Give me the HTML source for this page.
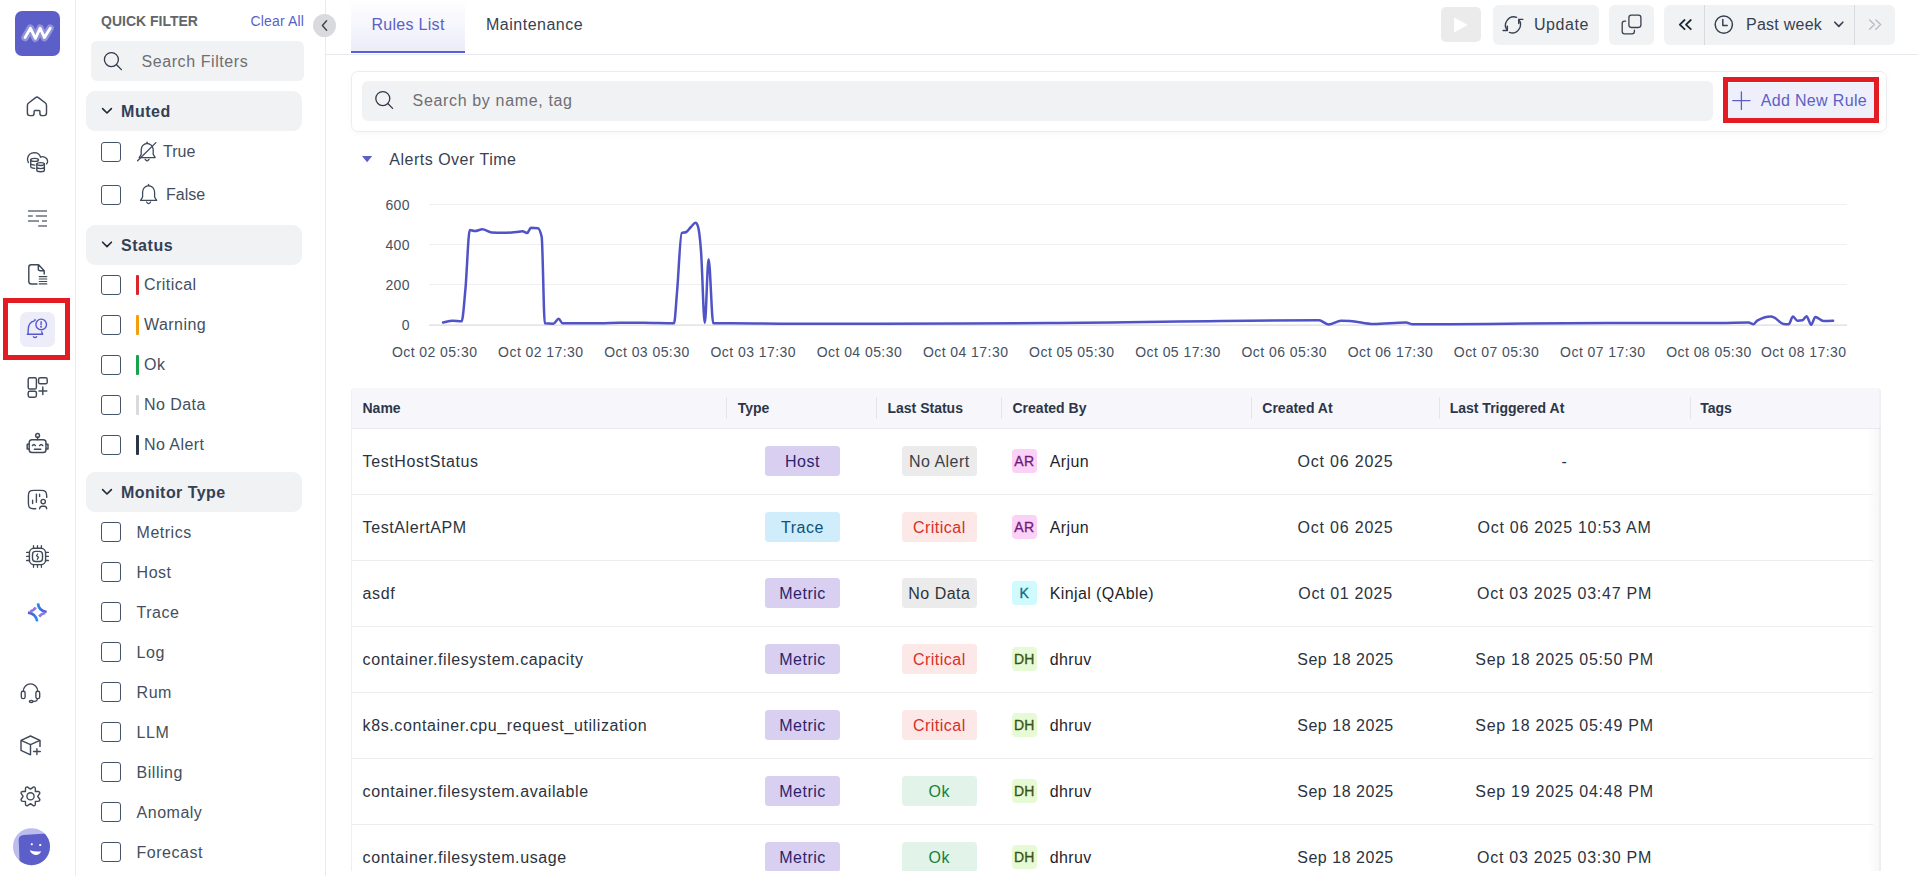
<!DOCTYPE html>
<html><head><meta charset="utf-8">
<style>
*{box-sizing:border-box;margin:0;padding:0}
html,body{width:1918px;height:876px;overflow:hidden;background:#fff;font-family:"Liberation Sans",sans-serif;color:#374151}
.a{position:absolute}
.t{position:absolute;white-space:nowrap;line-height:1}
svg{position:absolute;overflow:visible;z-index:5}
/* nav */
#nav{left:0;top:0;width:76px;height:876px;border-right:1px solid #ebebf1;background:#fff}
#fp{left:76px;top:0;width:250px;height:876px;border-right:1px solid #e9e9ef;background:#fff}
.hdr{position:absolute;left:86px;width:216px;height:40px;background:#f1f2f4;border-radius:9px}
.chev{position:absolute;left:102px}
.hdr-t{font-weight:bold;font-size:16px;color:#344054;left:121px}
.cb{position:absolute;left:101px;width:20px;height:20px;border:1.5px solid #44546a;border-radius:3px;background:#fff}
.ft{font-size:16px;color:#434f60;letter-spacing:0.3px}
.bar{position:absolute;left:136px;width:2.5px;height:20px;border-radius:1px}
</style></head><body>

<!-- LEFT NAV -->
<div id="nav" class="a"></div>
<div class="a" style="left:15px;top:11px;width:45px;height:45px;background:#5c5fc8;border-radius:7px"></div>
<svg style="left:15px;top:11px" width="45" height="45" viewBox="15 11 45 45">
  <polyline points="25,37.6 30.4,28.2 35.4,38.3 40.1,28.2 44.5,37.6 50.2,28.2" fill="none" stroke="rgba(255,255,255,0.33)" stroke-width="7.4" stroke-linecap="round" stroke-linejoin="round"/>
  <polyline points="25,37.6 30.4,28.2 35.4,38.3 40.1,28.2 44.5,37.6 50.2,28.2" fill="none" stroke="#fff" stroke-width="2.8" stroke-linecap="round" stroke-linejoin="round"/>
</svg>


<div class="a" style="left:20px;top:312px;width:35px;height:35px;background:#ededf9;border-radius:7px"></div>
<div class="a" style="left:2.6px;top:298.2px;width:67.8px;height:61.7px;border:5.2px solid #e31b23"></div>
<svg style="left:0;top:0" width="76" height="876" viewBox="0 0 76 876">
<g fill="none" stroke="#3f4958" stroke-width="1.45" stroke-linecap="round" stroke-linejoin="round">
  <!-- home -->
  <path d="M27.4,113 V105.4 Q27.4,104 28.6,103 L35.6,97.6 Q37,96.5 38.4,97.6 L45.4,103 Q46.5,104 46.5,105.4 V113 Q46.5,115.6 43.9,115.6 H42 Q39.9,115.6 39.9,113.5 V111.3 Q39.9,110.5 39,110.5 H35 Q34.1,110.5 34.1,111.3 V113.5 Q34.1,115.6 32,115.6 H30 Q27.4,115.6 27.4,113 Z"/>
  <!-- db cloud -->
  <path d="M28.4,162.6 Q27.2,160.4 27.6,158.2 Q28.6,152.8 34.4,152.6 Q39,152.6 40.6,157.2 Q42,156.4 43.6,156.8 Q47.4,157.8 47.6,161.4 Q47.6,162.8 46.6,163.9" stroke-width="1.35"/>
  <ellipse cx="34.6" cy="159.9" rx="3.9" ry="1.5" stroke-width="1.35"/>
  <path d="M30.7,159.9 V166.6 Q30.7,168.1 34.8,168.3 M30.7,163.2 Q30.7,164.8 34.8,165.1" stroke-width="1.35"/>
  <ellipse cx="40.6" cy="164" rx="3.8" ry="1.45" stroke-width="1.35"/>
  <path d="M36.8,164 V170.2 Q36.8,171.7 40.6,171.7 Q44.4,171.7 44.4,170.2 V164 M36.8,167.1 Q36.8,168.6 40.6,168.6 Q44.4,168.6 44.4,167.1" stroke-width="1.35"/>
  <!-- file -->
  <path d="M37,284 H31.2 Q28.8,284 28.8,281.6 V267.2 Q28.8,264.8 31.2,264.8 H38.6 L44.2,270.8 V274 M38.3,265 V268.8 Q38.3,270.8 40.3,270.8 H44.2"/>
  <path d="M39.2,276.6 H46.8 M39.2,279 H46.8 M39.2,281.5 H46.8 M39.2,283.9 H46.8" stroke-width="1.1"/>
  <!-- grid plus -->
  <rect x="28.2" y="377.8" width="8.2" height="11.2" rx="1.6"/>
  <rect x="28.2" y="391.2" width="8.2" height="6" rx="1.6"/>
  <rect x="38.6" y="377.8" width="8.6" height="6" rx="1.6"/>
  <path d="M42.8,387 V394.6 M39,391 H46.8"/>
  <!-- robot -->
  <circle cx="37.6" cy="435.4" r="1.9"/>
  <path d="M37.6,437.3 V439.8"/>
  <rect x="29.2" y="439.8" width="16.8" height="12.8" rx="2.8"/>
  <path d="M29.2,444.2 H27.2 V449 H29.2 M46,444.2 H48 V449 H46"/>
  <path d="M32.4,445.6 Q33.8,443.2 35.4,445.6 M39.6,445.6 Q41.2,443.2 42.8,445.6 M34.4,449.2 H40.8"/>
  <!-- analytics -->
  <path d="M35.7,508.7 H33.6 C29.6,508.7 28.4,507.4 28.4,503 V496 C28.4,491.6 29.6,490.4 34,490.4 H41 C45.4,490.4 46.6,491.6 46.7,496 V497.4" stroke-width="1.4"/>
  <path d="M32.6,500.3 V503.5 M36.4,494.3 V502.3 M39.6,494.3 V496.5" stroke-width="1.4"/>
  <circle cx="43.2" cy="501.6" r="2.2" stroke-width="1.4"/>
  <path d="M39.6,508.7 Q40,506.3 42,506.3 H44.6 Q46.4,506.3 46.7,508.7" stroke-width="1.4"/>
  <!-- chip -->
  <rect x="29.4" y="548.3" width="16.2" height="16.3" rx="4.6" stroke-width="1.4"/>
  <rect x="32.5" y="551.4" width="10" height="10.1" rx="3" stroke-width="1.4"/>
  <path d="M37.6,554 L36.5,555.8 L38.6,557.2 L37.4,559.2" stroke-width="1.3"/>
  <path d="M33.5,545.6 V548.3 M37.5,545.6 V548.3 M41.4,545.6 V548.3 M33.5,564.6 V567.3 M37.5,564.6 V567.3 M41.4,564.6 V567.3 M26.6,552.4 H29.4 M26.6,556.4 H29.4 M26.6,560.5 H29.4 M45.6,552.4 H48.4 M45.6,556.4 H48.4 M45.6,560.5 H48.4" stroke-width="1.3"/>
  <!-- headset -->
  <path d="M23.4,691 A7.05,7.05 0 0 1 37.6,691" stroke-width="1.35"/>
  <rect x="21.3" y="691.2" width="3.8" height="7.4" rx="1.7" stroke-width="1.35"/>
  <rect x="35.9" y="691.2" width="3.8" height="7.4" rx="1.7" stroke-width="1.35"/>
  <path d="M37.4,698.6 Q37.4,701.4 34.6,701.4 H33.2" stroke-width="1.2"/>
  <ellipse cx="31.2" cy="701.6" rx="1.9" ry="1.1" stroke-width="1.3"/>
  <!-- box plus -->
  <path d="M30.5,736 L21,740.4 V750.3 L30.5,754.8 M30.5,736 L40,740.4 V746.6 M21,740.4 L30.5,744.6 L40,740.4 M30.5,744.6 V754.8"/>
  <path d="M36.9,748.6 V754.6 M33.6,751.5 H40.3" stroke-width="1.4"/>
  <!-- gear -->
  <path d="M25.45,791.45 V788.6 Q25.6,786.8 27.2,786.9 L30.5,789.1 L33.6,786.9 Q35.2,786.8 35.35,788.6 V791.45 H38.2 Q40,791.6 39.9,793.1 L37.7,796.3 L39.9,799.5 Q40,801.1 38.2,801.35 H35.35 V804.2 Q35.2,805.9 33.6,805.8 L30.5,803.7 L27.2,805.8 Q25.6,805.9 25.45,804.2 V801.35 H22.6 Q20.9,801.1 21,799.5 L23.1,796.3 L21,793.1 Q20.9,791.6 22.6,791.45 Z" stroke-width="1.4"/>
  <circle cx="30.5" cy="796.3" r="3.6" stroke-width="1.4"/>
</g>
<!-- alert (active) -->
<g fill="none" stroke="#5557cc" stroke-width="1.4" stroke-linecap="round" stroke-linejoin="round">
  <path d="M35,319.4 V320.4 M34.4,320.9 C30.4,321.8 28.4,324.6 28.3,329 L28,334.2 M27.3,334.3 H42.7 M41.7,331.8 L42.5,334.1"/>
  <path d="M33.5,336.8 Q35,338.4 36.6,336.8"/>
  <circle cx="41.2" cy="324.4" r="5.3"/>
  <path d="M41.1,321.7 V324.7"/>
  <circle cx="41.1" cy="326.8" r="0.35" fill="#5557cc"/>
</g>
<!-- logs lines -->
<g stroke="#68717f" stroke-width="1.6" stroke-linecap="butt">
  <path d="M28,211 H47 M28,216 H32.8 M35.8,216 H47 M28,221 H39 M42,221 H47 M38.2,226 H47"/>
</g>
<!-- AI sparkle -->
<defs>
  <linearGradient id="aig" x1="0" y1="0" x2="1" y2="1">
    <stop offset="0" stop-color="#3b82f6"/><stop offset="1" stop-color="#8b5cf6"/>
  </linearGradient>
</defs>
<defs>
  <linearGradient id="ai1" gradientUnits="userSpaceOnUse" x1="38" y1="603" x2="46.7" y2="612"><stop offset="0" stop-color="#1f8ff0"/><stop offset="1" stop-color="#5b58d0"/></linearGradient>
  <linearGradient id="ai2" gradientUnits="userSpaceOnUse" x1="28" y1="612.7" x2="37" y2="621.3"><stop offset="0" stop-color="#5b58d0"/><stop offset="1" stop-color="#1f8ff0"/></linearGradient>
</defs>
<g fill="none" stroke-width="2.7" stroke-linecap="butt">
  <path d="M38,603.4 Q38.4,610.6 46.6,612" stroke="url(#ai1)"/>
  <path d="M28,612.6 Q36,613.6 37.2,621.4" stroke="url(#ai2)"/>
  <path d="M30,611.6 Q33.6,610.8 35.8,607.6" stroke="#8b7be8"/>
  <path d="M39.2,616.6 Q41.6,613.4 45.2,613" stroke="#8b7be8"/>
</g>
<!-- avatar -->
<circle cx="31.5" cy="846.7" r="18.5" fill="#bcbdec"/>
<clipPath id="avc"><circle cx="31.5" cy="846.7" r="18.5"/></clipPath>
<g clip-path="url(#avc)">
  <path d="M18.7,840 Q18.6,835.4 23.6,835 L46,833.4 Q52,833 52,838 V872 H20 Z" fill="#5c5ec9"/>
</g>
<rect x="30.8" y="843.2" width="2" height="2" rx="0.6" fill="#fff"/>
<rect x="39.2" y="844" width="2" height="2" rx="0.6" fill="#fff"/>
<path d="M29.8,850.2 Q35.6,852.2 41.2,851.2 Q39.6,855 35.6,854.9 Q31.4,854.6 29.8,850.2 Z" fill="#fff"/>
</svg>
<!-- FILTER PANEL -->
<div id="fp" class="a"></div>
<div class="t" style="left:101px;top:13.8px;font-size:14px;font-weight:bold;color:#626569;letter-spacing:0px">QUICK FILTER</div>
<div class="t" style="left:250.5px;top:14.4px;font-size:14px;color:#5b5fc7;letter-spacing:0.15px">Clear All</div>
<div class="a" style="left:91px;top:41px;width:213px;height:40px;background:#f1f2f4;border-radius:6px"></div>
<svg style="left:0;top:0" width="330" height="876" viewBox="0 0 330 876">
<g fill="none" stroke="#2f3a4b" stroke-width="1.3" stroke-linecap="round">
  <circle cx="111.4" cy="59.6" r="7"/>
  <path d="M116.6,64.8 L121.4,69.6"/>
</g>
<g fill="none" stroke="#1f2937" stroke-width="1.6" stroke-linecap="round" stroke-linejoin="round">
  <path d="M102.6,108.6 L107,113 L111.4,108.6"/>
  <path d="M102.6,242.2 L107,246.6 L111.4,242.2"/>
  <path d="M102.6,489.6 L107,494 L111.4,489.6"/>
</g>
<g fill="none" stroke="#3d4a5c" stroke-width="1.3" stroke-linecap="round" stroke-linejoin="round">
  <!-- bell off -->
  <path d="M147.1,143.4 Q141.6,144.2 141.2,149.8 V154.4 L139.2,157.6 H155.2 L153.2,154.4 V149.8 Q152.8,144.2 147.1,143.4 Z"/>
  <path d="M147.1,143.4 V142.2"/>
  <path d="M145.1,159.2 Q146.1,160.8 147.1,160.8 Q148.1,160.8 149.1,159.2"/>
  <path d="M137.6,160.8 L155.9,142.6"/>
  <!-- bell -->
  <path d="M148.6,185.6 Q143,186.4 142.6,192 V197 L140.6,200.4 H156.6 L154.6,197 V192 Q154.2,186.4 148.6,185.6 Z"/>
  <path d="M148.6,185.6 V184.4"/>
  <path d="M146.6,202 Q147.6,203.6 148.6,203.6 Q149.6,203.6 150.6,202"/>
</g>
</svg>
<div class="hdr" style="top:91px"></div>
<div class="t hdr-t" style="top:103.5px;letter-spacing:0.55px">Muted</div>
<div class="cb" style="top:142px"></div>
<div class="t ft" style="left:163px;top:143.5px;letter-spacing:0">True</div>
<div class="cb" style="top:185px"></div>
<div class="t ft" style="left:166px;top:186.5px;letter-spacing:0">False</div>

<div class="hdr" style="top:225px"></div>
<div class="t hdr-t" style="top:237.5px;letter-spacing:0.55px">Status</div>
<div class="cb" style="top:275px"></div><div class="bar" style="top:275px;background:#d9262c"></div><div class="t ft" style="left:144px;top:276.5px;letter-spacing:0.45px">Critical</div>
<div class="cb" style="top:315px"></div><div class="bar" style="top:315px;background:#f59e0b"></div><div class="t ft" style="left:144px;top:316.5px;letter-spacing:0.45px">Warning</div>
<div class="cb" style="top:355px"></div><div class="bar" style="top:355px;background:#16a34a"></div><div class="t ft" style="left:144px;top:356.5px;letter-spacing:0.45px">Ok</div>
<div class="cb" style="top:395px"></div><div class="bar" style="top:395px;background:#d9d9de"></div><div class="t ft" style="left:144px;top:396.5px;letter-spacing:0.45px">No Data</div>
<div class="cb" style="top:435px"></div><div class="bar" style="top:435px;background:#2a3547"></div><div class="t ft" style="left:144px;top:436.5px;letter-spacing:0.45px">No Alert</div>
<div class="hdr" style="top:472px"></div>
<div class="t hdr-t" style="top:484.5px;letter-spacing:0.45px">Monitor Type</div>
<div class="cb" style="top:522px"></div><div class="t ft" style="left:136.6px;top:524.5px;letter-spacing:0.5px">Metrics</div>
<div class="cb" style="top:562px"></div><div class="t ft" style="left:136.6px;top:564.5px;letter-spacing:0.5px">Host</div>
<div class="cb" style="top:602px"></div><div class="t ft" style="left:136.6px;top:604.5px;letter-spacing:0.5px">Trace</div>
<div class="cb" style="top:642px"></div><div class="t ft" style="left:136.6px;top:644.5px;letter-spacing:0.5px">Log</div>
<div class="cb" style="top:682px"></div><div class="t ft" style="left:136.6px;top:684.5px;letter-spacing:0.5px">Rum</div>
<div class="cb" style="top:722px"></div><div class="t ft" style="left:136.6px;top:724.5px;letter-spacing:0.5px">LLM</div>
<div class="cb" style="top:762px"></div><div class="t ft" style="left:136.6px;top:764.5px;letter-spacing:0.5px">Billing</div>
<div class="cb" style="top:802px"></div><div class="t ft" style="left:136.6px;top:804.5px;letter-spacing:0.5px">Anomaly</div>
<div class="cb" style="top:842px"></div><div class="t ft" style="left:136.6px;top:844.5px;letter-spacing:0.5px">Forecast</div>
<div class="t" style="left:141.4px;top:53.8px;font-size:16px;color:#6d6f73;letter-spacing:0.59px">Search Filters</div>
<div class="a" style="left:313px;top:14px;width:23px;height:23px;border-radius:50%;background:#d9dadd"></div>
<svg style="left:313px;top:14px" width="23" height="23" viewBox="0 0 23 23"><path d="M13.6,6.8 L9.4,11.5 L13.6,16.2" fill="none" stroke="#45474c" stroke-width="1.5" stroke-linecap="round" stroke-linejoin="round"/></svg>


<!-- MAIN -->
<div class="a" style="left:325px;top:54px;width:1593px;height:1px;background:#e8e8ef"></div>
<div class="a" style="left:351px;top:0;width:114px;height:53px;background:linear-gradient(#ffffff,#ebebf9)"></div>
<div class="a" style="left:351px;top:51.2px;width:114px;height:1.8px;background:#5a5fd2"></div>
<div class="t" style="left:371.4px;top:16.6px;font-size:16px;color:#5b5fc7;letter-spacing:0.3px">Rules List</div>
<div class="t" style="left:486px;top:16.6px;font-size:16px;color:#374151;letter-spacing:0.5px">Maintenance</div>

<div class="a" style="left:1441px;top:7px;width:40px;height:35px;background:#ebebeb;border-radius:5px"></div>
<div class="a" style="left:1493px;top:5px;width:106px;height:40px;background:#f1f2f4;border-radius:6px"></div>
<div class="t" style="left:1534px;top:16.5px;font-size:16px;color:#374151;letter-spacing:0.57px">Update</div>
<div class="a" style="left:1609px;top:5px;width:45px;height:40px;background:#f1f2f4;border-radius:6px"></div>
<div class="a" style="left:1664px;top:5px;width:231px;height:40px;background:#f1f2f4;border-radius:6px"></div>
<div class="a" style="left:1704px;top:5px;width:1px;height:40px;background:#d9dadf"></div>
<div class="a" style="left:1854px;top:5px;width:1px;height:40px;background:#d9dadf"></div>
<div class="t" style="left:1746px;top:17.4px;font-size:16px;color:#374151;letter-spacing:0.25px">Past week</div>

<!-- search card -->
<div class="a" style="left:351px;top:70.5px;width:1536px;height:61px;border:1px solid #ececf1;border-radius:7px;box-shadow:0 2px 6px rgba(0,0,0,0.03)"></div>
<div class="a" style="left:362px;top:81px;width:1351px;height:40px;background:#f1f2f4;border-radius:6px"></div>
<div class="t" style="left:412.6px;top:92.9px;font-size:16px;color:#6d6f73;letter-spacing:0.65px">Search by name, tag</div>
<div class="a" style="left:1728.3px;top:82.6px;width:145.7px;height:35.4px;background:#eeeffa"></div>
<div class="a" style="left:1723px;top:77.4px;width:156px;height:45.2px;border:5px solid #e31b23"></div>
<div class="t" style="left:1760.7px;top:93.3px;font-size:16px;color:#5b5fc7;letter-spacing:0.34px">Add New Rule</div>

<div class="t" style="left:389.3px;top:151.5px;font-size:16px;color:#374151;letter-spacing:0.5px">Alerts Over Time</div>

<svg style="left:0;top:0" width="1918" height="876" viewBox="0 0 1918 876">
<g fill="none" stroke="#2f3a4b" stroke-width="1.3" stroke-linecap="round" stroke-linejoin="round">
  <!-- search icon main -->
  <circle cx="382.8" cy="98.6" r="7"/>
  <path d="M388,103.8 L392.6,108.4"/>
</g>
<!-- play -->
<path d="M1454.2,17.6 L1467.6,25 L1454.2,32.4 Z" fill="#fff"/>
<g fill="none" stroke="#374151" stroke-width="1.5" stroke-linecap="round" stroke-linejoin="round">
  <!-- refresh -->
  <path d="M1516.7,17.3 A8.4,8.4 0 0 0 1507.4,30.5 M1507.4,26.2 V30.5 H1503.1" stroke-width="1.35"/>
  <path d="M1509.4,32.4 A8.4,8.4 0 0 0 1518.7,19.3 M1518.7,23.5 V19.3 H1522.9" stroke-width="1.35"/>
  <!-- copy -->
  <rect x="1628.9" y="15.1" width="12" height="12.4" rx="2.4" stroke-width="1.3"/>
  <path d="M1625.6,21.2 H1624.6 Q1622.2,21.2 1622.2,23.6 V31.4 Q1622.2,33.8 1624.6,33.8 H1632 Q1634.4,33.8 1634.4,31.4 V30.1" stroke-width="1.3"/>
  <!-- double left -->
  <path d="M1684.6,20 L1679.8,24.6 L1684.6,29.2 M1690.8,20 L1686,24.6 L1690.8,29.2" stroke="#1f2937" stroke-width="1.8"/>
  <!-- clock -->
  <circle cx="1723.8" cy="24.6" r="8.6"/>
  <path d="M1722.8,19.4 V25.6 H1727.2"/>
  <!-- chevron down -->
  <path d="M1834.8,22.2 L1838.8,26.4 L1842.8,22.2" stroke-width="1.6"/>
  <!-- double right -->
  <path d="M1869.6,20 L1874.4,24.6 L1869.6,29.2 M1875.8,20 L1880.6,24.6 L1875.8,29.2" stroke="#b9bcc4" stroke-width="1.4"/>
  <!-- plus -->
  <path d="M1741.4,92 V109.4 M1732.8,100.6 H1750" stroke="#5b5fc7" stroke-width="1.3"/>
</g>
<!-- triangle -->
<path d="M362,156 H372.2 L367.1,162.2 Z" fill="#5b5fc7"/>
<path d="M429,204.5 H1847" stroke="#f0f0f2" stroke-width="1"/><path d="M429,244.5 H1847" stroke="#f0f0f2" stroke-width="1"/><path d="M429,284.5 H1847" stroke="#f0f0f2" stroke-width="1"/><path d="M429,325.2 H1847" stroke="#dcdcdf" stroke-width="1.2"/>
<path fill="none" stroke="#5053c6" stroke-width="2.5" stroke-linejoin="round" stroke-linecap="round" d="M443.1,322.5 C446.2,321.9 449.2,320.7 452.3,320.7 C455.4,320.7 458.5,321.3 461.6,321.3 C462.9,321.3 464.1,303.0 465.4,289.4 C466.9,273.6 468.3,230.0 469.8,230.0 C471.4,230.0 473.1,231.1 474.7,231.1 C477.3,231.1 479.8,229.3 482.4,229.3 C485.5,229.3 488.5,232.2 491.6,232.4 C495.7,232.7 499.9,232.8 504.0,232.8 C508.1,232.8 512.2,232.4 516.3,232.0 C518.4,231.8 520.4,231.3 522.5,231.3 C524.0,231.3 525.6,233.1 527.1,233.1 C528.4,233.1 529.7,227.7 531.0,227.7 C533.3,227.7 535.6,227.9 537.9,228.2 C539.2,228.4 540.4,231.1 541.7,237.0 C542.7,241.8 543.8,323.2 544.8,323.3 C547.6,323.6 550.5,323.7 553.3,323.7 C555.1,323.7 556.9,318.7 558.7,318.7 C560.0,318.7 561.2,323.3 562.5,323.3 C575.0,323.3 587.5,323.3 600.0,323.3 C606.7,323.3 613.3,322.8 620.0,322.8 C627.7,322.8 635.3,322.8 643.0,322.8 C653.3,322.8 663.7,323.3 674.0,323.3 C675.0,323.3 676.0,303.7 677.0,292.5 C678.6,275.0 680.1,233.8 681.7,233.1 C683.2,232.4 684.8,232.7 686.3,232.0 C687.8,231.3 689.4,228.5 690.9,227.0 C692.4,225.5 694.0,222.8 695.5,222.8 C696.3,222.8 697.1,223.9 697.9,226.2 C698.9,229.1 700.0,237.6 701.0,250.9 C702.3,267.3 703.5,323.0 704.8,323.0 C706.1,323.0 707.3,259.3 708.6,259.3 C710.2,259.3 711.7,323.3 713.3,323.3 C719.2,323.3 725.1,323.3 731.0,323.3 C747.3,323.3 763.7,323.7 780.0,323.7 C813.3,323.8 846.7,323.8 880.0,323.8 C936.7,323.8 993.3,323.4 1050.0,323.0 C1139.7,322.4 1229.3,320.3 1319.0,320.3 C1322.2,320.3 1325.5,324.4 1328.7,324.4 C1332.8,324.4 1336.9,320.8 1341.0,320.8 C1344.0,320.8 1347.0,320.9 1350.0,321.0 C1357.8,321.3 1365.7,324.0 1373.5,324.0 C1384.3,324.0 1395.2,322.4 1406.0,322.4 C1408.2,322.4 1410.4,324.3 1412.6,324.3 C1437.6,324.3 1462.7,324.2 1487.7,324.0 C1513.8,323.8 1539.9,323.4 1566.0,323.2 C1581.6,323.1 1597.2,323.0 1612.8,323.0 C1648.5,323.0 1684.3,323.0 1720.0,323.0 C1729.5,323.0 1739.0,322.6 1748.5,322.6 C1750.2,322.6 1751.9,324.2 1753.6,324.2 C1754.8,324.2 1756.0,321.4 1757.2,320.7 C1761.8,318.0 1766.5,316.6 1771.1,316.6 C1772.1,316.6 1773.0,317.0 1774.0,317.4 C1777.2,318.6 1780.3,323.6 1783.5,324.0 C1785.2,324.2 1786.9,324.3 1788.6,324.3 C1790.1,324.3 1791.5,316.6 1793.0,316.6 C1794.5,316.6 1795.9,320.7 1797.4,320.7 C1799.1,320.7 1800.8,320.6 1802.5,320.3 C1803.8,320.1 1805.2,316.3 1806.5,316.3 C1808.1,316.3 1809.6,324.7 1811.2,324.7 C1812.6,324.7 1813.9,316.9 1815.3,316.9 C1818.1,316.9 1820.8,321.0 1823.6,321.0 C1826.8,321.0 1829.9,320.9 1833.1,320.8"/>
</svg>
<div class="t" style="right:1508px;top:198.2px;font-size:14px;color:#465061;letter-spacing:0.4px">600</div>
<div class="t" style="right:1508px;top:238.2px;font-size:14px;color:#465061;letter-spacing:0.4px">400</div>
<div class="t" style="right:1508px;top:278.2px;font-size:14px;color:#465061;letter-spacing:0.4px">200</div>
<div class="t" style="right:1508px;top:318.2px;font-size:14px;color:#465061;letter-spacing:0.4px">0</div>
<div class="t" style="left:391.9px;width:85.5px;text-align:center;top:345px;font-size:14px;color:#465061;letter-spacing:0.44px">Oct 02 05:30</div>
<div class="t" style="left:498.1px;width:85.5px;text-align:center;top:345px;font-size:14px;color:#465061;letter-spacing:0.44px">Oct 02 17:30</div>
<div class="t" style="left:604.2px;width:85.5px;text-align:center;top:345px;font-size:14px;color:#465061;letter-spacing:0.44px">Oct 03 05:30</div>
<div class="t" style="left:710.5px;width:85.5px;text-align:center;top:345px;font-size:14px;color:#465061;letter-spacing:0.44px">Oct 03 17:30</div>
<div class="t" style="left:816.7px;width:85.5px;text-align:center;top:345px;font-size:14px;color:#465061;letter-spacing:0.44px">Oct 04 05:30</div>
<div class="t" style="left:922.9px;width:85.5px;text-align:center;top:345px;font-size:14px;color:#465061;letter-spacing:0.44px">Oct 04 17:30</div>
<div class="t" style="left:1029.1px;width:85.5px;text-align:center;top:345px;font-size:14px;color:#465061;letter-spacing:0.44px">Oct 05 05:30</div>
<div class="t" style="left:1135.2px;width:85.5px;text-align:center;top:345px;font-size:14px;color:#465061;letter-spacing:0.44px">Oct 05 17:30</div>
<div class="t" style="left:1241.5px;width:85.5px;text-align:center;top:345px;font-size:14px;color:#465061;letter-spacing:0.44px">Oct 06 05:30</div>
<div class="t" style="left:1347.7px;width:85.5px;text-align:center;top:345px;font-size:14px;color:#465061;letter-spacing:0.44px">Oct 06 17:30</div>
<div class="t" style="left:1453.8px;width:85.5px;text-align:center;top:345px;font-size:14px;color:#465061;letter-spacing:0.44px">Oct 07 05:30</div>
<div class="t" style="left:1560.1px;width:85.5px;text-align:center;top:345px;font-size:14px;color:#465061;letter-spacing:0.44px">Oct 07 17:30</div>
<div class="t" style="left:1666.2px;width:85.5px;text-align:center;top:345px;font-size:14px;color:#465061;letter-spacing:0.44px">Oct 08 05:30</div>
<div class="t" style="left:1761.0px;width:85.5px;text-align:center;top:345px;font-size:14px;color:#465061;letter-spacing:0.44px">Oct 08 17:30</div>

<!-- TABLE -->
<div class="a" style="left:351px;top:387.5px;width:1529.5px;height:500px;border-left:1px solid #eeeef3;border-radius:4px 4px 0 0;overflow:hidden">
  <div class="a" style="left:0;top:0;width:1529px;height:41px;background:#f7f7fb;border-bottom:1px solid #e9e9ef"></div>
  <div class="a" style="right:0;top:41px;width:13px;height:460px;background:linear-gradient(90deg,rgba(40,40,80,0),rgba(40,40,80,0.045))"></div><div class="a" style="right:0;top:0;width:1.5px;height:500px;background:rgba(40,40,90,0.035)"></div>
</div>
<div class="a" style="left:726px;top:397.4px;width:1px;height:21.4px;background:#e4e4ea"></div>
<div class="a" style="left:876px;top:397.4px;width:1px;height:21.4px;background:#e4e4ea"></div>
<div class="a" style="left:1001px;top:397.4px;width:1px;height:21.4px;background:#e4e4ea"></div>
<div class="a" style="left:1251px;top:397.4px;width:1px;height:21.4px;background:#e4e4ea"></div>
<div class="a" style="left:1439px;top:397.4px;width:1px;height:21.4px;background:#e4e4ea"></div>
<div class="a" style="left:1690px;top:397.4px;width:1px;height:21.4px;background:#e4e4ea"></div>
<div class="t" style="left:362.5px;top:401px;font-size:14px;font-weight:bold;color:#2d3648">Name</div>
<div class="t" style="left:737.7px;top:401px;font-size:14px;font-weight:bold;color:#2d3648">Type</div>
<div class="t" style="left:887.5px;top:401px;font-size:14px;font-weight:bold;color:#2d3648">Last Status</div>
<div class="t" style="left:1012.5px;top:401px;font-size:14px;font-weight:bold;color:#2d3648">Created By</div>
<div class="t" style="left:1262.3px;top:401px;font-size:14px;font-weight:bold;color:#2d3648">Created At</div>
<div class="t" style="left:1449.7px;top:401px;font-size:14px;font-weight:bold;color:#2d3648">Last Triggered At</div>
<div class="t" style="left:1700.2px;top:401px;font-size:14px;font-weight:bold;color:#2d3648">Tags</div>
<div class="a" style="left:352px;top:493.6px;width:1521px;height:1px;background:#ececf1"></div>
<div class="t" style="left:362.6px;top:453.5px;font-size:16px;color:#2b3340;letter-spacing:0.6px">TestHostStatus</div>
<div class="t" style="left:765.2px;top:446px;width:74.6px;height:30px;line-height:32px;text-align:center;background:#d9cff0;color:#2e1f6e;border-radius:3.5px;font-size:16px;letter-spacing:0.5px">Host</div>
<div class="t" style="left:902px;top:446px;width:74.7px;height:30px;line-height:32px;text-align:center;background:#ebebeb;color:#3a3f47;border-radius:3.5px;font-size:16px;letter-spacing:0.5px">No Alert</div>
<div class="t" style="left:1012px;top:448.8px;width:24.6px;height:24.4px;line-height:24.4px;text-align:center;background:#fbd1f7;color:#701a75;border-radius:4px;font-size:14px;letter-spacing:0.2px;-webkit-text-stroke:0.3px currentColor">AR</div>
<div class="t" style="left:1049.7px;top:453.5px;font-size:16px;color:#1f1f2e;letter-spacing:0.4px">Arjun</div>
<div class="t" style="left:1245.5px;width:200px;text-align:center;top:453.5px;font-size:16px;color:#2b3340;letter-spacing:0.8px">Oct 06 2025</div>
<div class="t" style="left:1464.5px;width:200px;text-align:center;top:453.5px;font-size:16px;color:#2b3340;letter-spacing:0.74px">-</div>
<div class="a" style="left:352px;top:559.6px;width:1521px;height:1px;background:#ececf1"></div>
<div class="t" style="left:362.6px;top:519.5px;font-size:16px;color:#2b3340;letter-spacing:0.6px">TestAlertAPM</div>
<div class="t" style="left:765.2px;top:512px;width:74.6px;height:30px;line-height:32px;text-align:center;background:#cfedfb;color:#0b5478;border-radius:3.5px;font-size:16px;letter-spacing:0.5px">Trace</div>
<div class="t" style="left:902px;top:512px;width:74.7px;height:30px;line-height:32px;text-align:center;background:#fde8e8;color:#d72f2a;border-radius:3.5px;font-size:16px;letter-spacing:0.5px">Critical</div>
<div class="t" style="left:1012px;top:514.8px;width:24.6px;height:24.4px;line-height:24.4px;text-align:center;background:#fbd1f7;color:#701a75;border-radius:4px;font-size:14px;letter-spacing:0.2px;-webkit-text-stroke:0.3px currentColor">AR</div>
<div class="t" style="left:1049.7px;top:519.5px;font-size:16px;color:#1f1f2e;letter-spacing:0.4px">Arjun</div>
<div class="t" style="left:1245.5px;width:200px;text-align:center;top:519.5px;font-size:16px;color:#2b3340;letter-spacing:0.8px">Oct 06 2025</div>
<div class="t" style="left:1464.5px;width:200px;text-align:center;top:519.5px;font-size:16px;color:#2b3340;letter-spacing:0.74px">Oct 06 2025 10:53 AM</div>
<div class="a" style="left:352px;top:625.6px;width:1521px;height:1px;background:#ececf1"></div>
<div class="t" style="left:362.6px;top:585.5px;font-size:16px;color:#2b3340;letter-spacing:0.6px">asdf</div>
<div class="t" style="left:765.2px;top:578px;width:74.6px;height:30px;line-height:32px;text-align:center;background:#d9cff0;color:#2e1f6e;border-radius:3.5px;font-size:16px;letter-spacing:0.5px">Metric</div>
<div class="t" style="left:902px;top:578px;width:74.7px;height:30px;line-height:32px;text-align:center;background:#ebebeb;color:#2f343c;border-radius:3.5px;font-size:16px;letter-spacing:0.5px">No Data</div>
<div class="t" style="left:1012px;top:580.8px;width:24.6px;height:24.4px;line-height:24.4px;text-align:center;background:#cffafe;color:#0e6a80;border-radius:4px;font-size:14px;letter-spacing:0.2px;-webkit-text-stroke:0.3px currentColor">K</div>
<div class="t" style="left:1049.7px;top:585.5px;font-size:16px;color:#1f1f2e;letter-spacing:0.4px">Kinjal (QAble)</div>
<div class="t" style="left:1245.5px;width:200px;text-align:center;top:585.5px;font-size:16px;color:#2b3340;letter-spacing:0.66px">Oct 01 2025</div>
<div class="t" style="left:1464.5px;width:200px;text-align:center;top:585.5px;font-size:16px;color:#2b3340;letter-spacing:0.74px">Oct 03 2025 03:47 PM</div>
<div class="a" style="left:352px;top:691.6px;width:1521px;height:1px;background:#ececf1"></div>
<div class="t" style="left:362.6px;top:651.5px;font-size:16px;color:#2b3340;letter-spacing:0.6px">container.filesystem.capacity</div>
<div class="t" style="left:765.2px;top:644px;width:74.6px;height:30px;line-height:32px;text-align:center;background:#d9cff0;color:#2e1f6e;border-radius:3.5px;font-size:16px;letter-spacing:0.5px">Metric</div>
<div class="t" style="left:902px;top:644px;width:74.7px;height:30px;line-height:32px;text-align:center;background:#fde8e8;color:#d72f2a;border-radius:3.5px;font-size:16px;letter-spacing:0.5px">Critical</div>
<div class="t" style="left:1012px;top:646.8px;width:24.6px;height:24.4px;line-height:24.4px;text-align:center;background:#e6fbd5;color:#365314;border-radius:4px;font-size:14px;letter-spacing:0.2px;-webkit-text-stroke:0.3px currentColor">DH</div>
<div class="t" style="left:1049.7px;top:651.5px;font-size:16px;color:#1f1f2e;letter-spacing:0.4px">dhruv</div>
<div class="t" style="left:1245.5px;width:200px;text-align:center;top:651.5px;font-size:16px;color:#2b3340;letter-spacing:0.53px">Sep 18 2025</div>
<div class="t" style="left:1464.5px;width:200px;text-align:center;top:651.5px;font-size:16px;color:#2b3340;letter-spacing:0.74px">Sep 18 2025 05:50 PM</div>
<div class="a" style="left:352px;top:757.6px;width:1521px;height:1px;background:#ececf1"></div>
<div class="t" style="left:362.6px;top:717.5px;font-size:16px;color:#2b3340;letter-spacing:0.6px">k8s.container.cpu_request_utilization</div>
<div class="t" style="left:765.2px;top:710px;width:74.6px;height:30px;line-height:32px;text-align:center;background:#d9cff0;color:#2e1f6e;border-radius:3.5px;font-size:16px;letter-spacing:0.5px">Metric</div>
<div class="t" style="left:902px;top:710px;width:74.7px;height:30px;line-height:32px;text-align:center;background:#fde8e8;color:#d72f2a;border-radius:3.5px;font-size:16px;letter-spacing:0.5px">Critical</div>
<div class="t" style="left:1012px;top:712.8px;width:24.6px;height:24.4px;line-height:24.4px;text-align:center;background:#e6fbd5;color:#365314;border-radius:4px;font-size:14px;letter-spacing:0.2px;-webkit-text-stroke:0.3px currentColor">DH</div>
<div class="t" style="left:1049.7px;top:717.5px;font-size:16px;color:#1f1f2e;letter-spacing:0.4px">dhruv</div>
<div class="t" style="left:1245.5px;width:200px;text-align:center;top:717.5px;font-size:16px;color:#2b3340;letter-spacing:0.53px">Sep 18 2025</div>
<div class="t" style="left:1464.5px;width:200px;text-align:center;top:717.5px;font-size:16px;color:#2b3340;letter-spacing:0.74px">Sep 18 2025 05:49 PM</div>
<div class="a" style="left:352px;top:823.6px;width:1521px;height:1px;background:#ececf1"></div>
<div class="t" style="left:362.6px;top:783.5px;font-size:16px;color:#2b3340;letter-spacing:0.6px">container.filesystem.available</div>
<div class="t" style="left:765.2px;top:776px;width:74.6px;height:30px;line-height:32px;text-align:center;background:#d9cff0;color:#2e1f6e;border-radius:3.5px;font-size:16px;letter-spacing:0.5px">Metric</div>
<div class="t" style="left:902px;top:776px;width:74.7px;height:30px;line-height:32px;text-align:center;background:#e2f4ea;color:#15803d;border-radius:3.5px;font-size:16px;letter-spacing:0.5px">Ok</div>
<div class="t" style="left:1012px;top:778.8px;width:24.6px;height:24.4px;line-height:24.4px;text-align:center;background:#e6fbd5;color:#365314;border-radius:4px;font-size:14px;letter-spacing:0.2px;-webkit-text-stroke:0.3px currentColor">DH</div>
<div class="t" style="left:1049.7px;top:783.5px;font-size:16px;color:#1f1f2e;letter-spacing:0.4px">dhruv</div>
<div class="t" style="left:1245.5px;width:200px;text-align:center;top:783.5px;font-size:16px;color:#2b3340;letter-spacing:0.53px">Sep 18 2025</div>
<div class="t" style="left:1464.5px;width:200px;text-align:center;top:783.5px;font-size:16px;color:#2b3340;letter-spacing:0.74px">Sep 19 2025 04:48 PM</div>
<div class="t" style="left:362.6px;top:849.5px;font-size:16px;color:#2b3340;letter-spacing:0.6px">container.filesystem.usage</div>
<div class="t" style="left:765.2px;top:842px;width:74.6px;height:30px;line-height:32px;text-align:center;background:#d9cff0;color:#2e1f6e;border-radius:3.5px;font-size:16px;letter-spacing:0.5px">Metric</div>
<div class="t" style="left:902px;top:842px;width:74.7px;height:30px;line-height:32px;text-align:center;background:#e2f4ea;color:#15803d;border-radius:3.5px;font-size:16px;letter-spacing:0.5px">Ok</div>
<div class="t" style="left:1012px;top:844.8px;width:24.6px;height:24.4px;line-height:24.4px;text-align:center;background:#e6fbd5;color:#365314;border-radius:4px;font-size:14px;letter-spacing:0.2px;-webkit-text-stroke:0.3px currentColor">DH</div>
<div class="t" style="left:1049.7px;top:849.5px;font-size:16px;color:#1f1f2e;letter-spacing:0.4px">dhruv</div>
<div class="t" style="left:1245.5px;width:200px;text-align:center;top:849.5px;font-size:16px;color:#2b3340;letter-spacing:0.53px">Sep 18 2025</div>
<div class="t" style="left:1464.5px;width:200px;text-align:center;top:849.5px;font-size:16px;color:#2b3340;letter-spacing:0.74px">Oct 03 2025 03:30 PM</div>
<div class="a" style="left:340px;top:871px;width:1578px;height:10px;background:#fff;z-index:10"></div>
</body></html>
